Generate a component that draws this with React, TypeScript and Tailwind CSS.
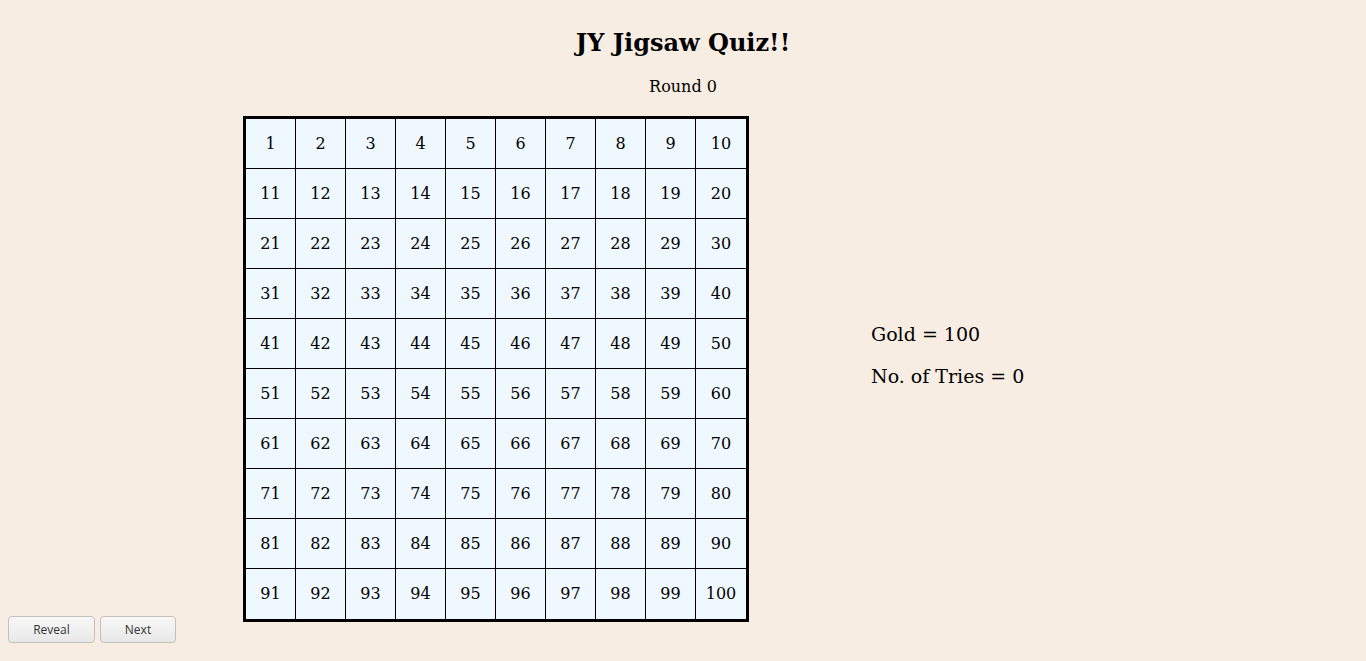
import React from "react";

const serif = { fontFamily: '"DejaVu Serif", serif' };

export default function App() {
  const nums = Array.from({ length: 100 }, (_, i) => i + 1);
  return (
    <div className="w-[1366px] h-[661px] bg-[#f8ede3] text-black overflow-hidden" style={serif}>
      <div className="pt-[29px] flex flex-col items-center">
        <h2 className="text-[24px] leading-[28px] font-bold">JY Jigsaw Quiz!!</h2>
        <div className="mt-[20px] text-[16px] leading-[19px]">Round 0</div>
      </div>
      <div className="flex mt-[20px] h-[527px]">
        <div className="w-[243px] flex items-end pl-[8px] gap-[5px]" style={{ fontFamily: '"Open Sans", "Noto Sans", sans-serif' }}>
          <button className="w-[87px] h-[27px] rounded-[4px] border border-[#c4c0bb] bg-gradient-to-b from-[#f8f8f8] to-[#e8e8e8] text-[12px] text-[#333]">
            Reveal
          </button>
          <button className="w-[76px] h-[27px] rounded-[4px] border border-[#c4c0bb] bg-gradient-to-b from-[#f8f8f8] to-[#e8e8e8] text-[12px] text-[#333]">
            Next
          </button>
        </div>
        <div className="self-start border-[3px] border-black grid grid-cols-10 bg-[#f0f8ff]">
          {nums.map((n, i) => {
            const col = i % 10;
            const row = Math.floor(i / 10);
            return (
              <div
                key={n}
                className={
                  "w-[50px] h-[50px] flex items-center justify-center text-[16px] border-black " +
                  (col < 9 ? "border-r " : "") +
                  (row < 9 ? "border-b" : "")
                }
              >
                {n}
              </div>
            );
          })}
        </div>
        <div className="ml-[122px] mt-[207px] text-[19px] leading-[22px]">
          <div>Gold = 100</div>
          <div className="mt-[20px]">No. of Tries = 0</div>
        </div>
      </div>
    </div>
  );
}
